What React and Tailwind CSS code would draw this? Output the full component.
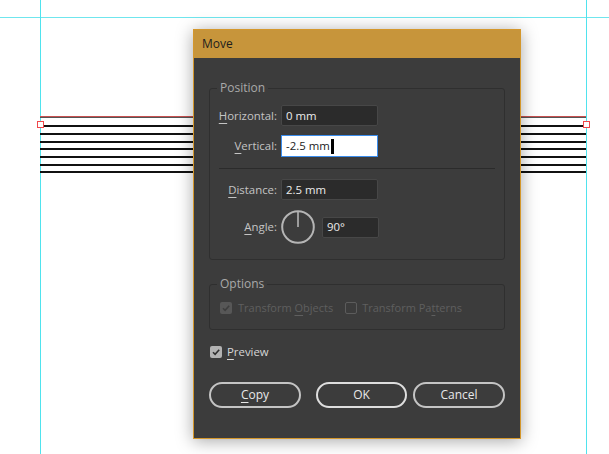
import React from "react";

const ui = { fontFamily: '"Open Sans", "Noto Sans", Arial, sans-serif' };

// stroke rows of the artwork, top to bottom
const strokes = [
  "mt-[7px]",
  "mt-[6px]",
  "mt-[6px]",
  "mt-[5px]",
  "mt-[6px]",
  "mt-[6px]",
  "mt-[5px]",
];

const Key = ({ children }) => (
  <span className="underline underline-offset-[3px] decoration-[1px]">{children}</span>
);

const Check = ({ on, disabled }) => {
  if (!on) {
    return <span className="block w-[12px] h-[12px] rounded-[2px] border border-[#5c5c5c] shrink-0" />;
  }
  return (
    <span
      className={
        "w-[12px] h-[12px] rounded-[2px] flex items-center justify-center shrink-0 " +
        (disabled ? "bg-[#575757]" : "bg-[#b3b3b3]")
      }
    >
      <svg width="10" height="10" viewBox="0 0 10 10">
        <polyline
          points="2,5.2 4.1,7.3 8.2,2.8"
          fill="none"
          stroke={disabled ? "#3e3e3e" : "#2f2f2f"}
          strokeWidth="1.6"
        />
      </svg>
    </span>
  );
};

const Field = ({ children, className = "" }) => (
  <div
    className={
      "h-[21px] bg-[#2b2b2b] border border-[#474747] rounded-[2px] flex items-center pl-[4px] text-[#ececec] " +
      className
    }
  >
    {children}
  </div>
);

const Label = ({ children }) => (
  <div className="w-[67px] text-right text-[#c4c4c4] shrink-0">{children}</div>
);

const Group = ({ title, className = "", children }) => (
  <fieldset className={"border border-[#2f2f2f] rounded-[3px] " + className}>
    <legend className="ml-[7px] px-[3px] leading-[16px] text-[#a9a9a9] text-[12px]">{title}</legend>
    {children}
  </fieldset>
);

const Btn = ({ children, primary, className = "" }) => (
  <button
    className={
      "h-[26px] rounded-full flex items-center justify-center text-[#e8e8e8] text-[12px] " +
      (primary ? "border-[2.5px] border-[#dedede] " : "border-2 border-[#c4c4c4] ") +
      className
    }
  >
    {children}
  </button>
);

export default function App() {
  return (
    <div className="relative w-[609px] h-[454px] bg-white overflow-hidden" style={ui}>
      {/* guides */}
      <div className="absolute left-0 right-0 top-[17px] h-px bg-[#6fe6ee]" />
      <div className="absolute top-0 bottom-0 left-[40px] w-px bg-[#4fe3ee]" />
      <div className="absolute top-0 bottom-0 left-[586px] w-px bg-[#4fe3ee]" />

      {/* artwork strokes */}
      <div className="absolute left-[40px] top-[116px] w-[546px] flex flex-col">
        <div className="h-px bg-[#c85050]" />
        <div className="h-px bg-[#555]" />
        {strokes.map((m, i) => (
          <div key={i} className={m + " h-[2px] bg-[#111]"} />
        ))}
      </div>
      <div className="absolute left-[37px] top-[121px] w-[7px] h-[7px] border-[1.5px] border-[#f0484b] bg-white" />
      <div className="absolute left-[583px] top-[121px] w-[7px] h-[7px] border-[1.5px] border-[#f0484b] bg-white" />

      {/* Move dialog */}
      <div className="absolute left-[193px] top-[29px] w-[328px] h-[410px] border border-[#d4972c] bg-[#3c3c3c] shadow-[0_2px_16px_rgba(0,0,0,0.35)] flex flex-col text-[11.4px]">
        <div className="h-[28px] bg-[#c7953b] flex items-center pl-[8px] text-[#1d1d1d] text-[12px]">
          Move
        </div>

        <div className="px-[15px] flex flex-col">
          <Group title="Position" className="mt-[22px] pt-[9px] pb-[15px]">
            <div className="flex items-center">
              <Label>
                <Key>H</Key>orizontal:
              </Label>
              <Field className="ml-[4px] w-[97px]">0 mm</Field>
            </div>
            <div className="flex items-center mt-[9px]">
              <Label>
                <Key>V</Key>ertical:
              </Label>
              <div className="ml-[4px] w-[97px] h-[22px] bg-white border border-[#3b8ded] flex items-center pl-[4px] text-[#1c1c1c]">
                -2.5 mm
                <span className="w-[3px] h-[15px] bg-black ml-[1px]" />
              </div>
            </div>
            <div className="mx-[9px] mt-[11px] h-px bg-[#2b2b2b]" />
            <div className="flex items-center mt-[10px]">
              <Label>
                <Key>D</Key>istance:
              </Label>
              <Field className="ml-[4px] w-[97px]">2.5 mm</Field>
            </div>
            <div className="flex items-center mt-[10px]">
              <Label>
                <Key>A</Key>ngle:
              </Label>
              <svg className="ml-[4px]" width="34" height="34" viewBox="0 0 34 34">
                <circle cx="17" cy="17" r="15.8" fill="none" stroke="#b5b5b5" strokeWidth="2" />
                <line x1="17" y1="17" x2="17" y2="1.5" stroke="#b5b5b5" strokeWidth="1.6" />
              </svg>
              <Field className="ml-[7px] w-[57px] h-[20px]">90°</Field>
            </div>
          </Group>

          <Group title="Options" className="mt-[16px] pt-[8px] pb-[13px]">
            <div className="h-[16px] flex items-center pl-[10px] text-[#5f5f5f] text-[11px]">
              <Check on disabled />
              <span className="ml-[6px]">
                Transform <Key>O</Key>bjects
              </span>
              <span className="ml-[12px]">
                <Check />
              </span>
              <span className="ml-[5px]">
                Transform Pa<Key>t</Key>terns
              </span>
            </div>
          </Group>

          <div className="h-[16px] mt-[14px] flex items-center pl-[1px] text-[#d6d6d6]">
            <Check on />
            <span className="ml-[5px]">
              <Key>P</Key>review
            </span>
          </div>

          <div className="flex mt-[22px]">
            <Btn className="w-[92px]">
              <span>
                <Key>C</Key>opy
              </span>
            </Btn>
            <Btn primary className="ml-[15px] w-[91px]">
              OK
            </Btn>
            <Btn className="ml-[6px] w-[92px]">Cancel</Btn>
          </div>
        </div>
      </div>
    </div>
  );
}
